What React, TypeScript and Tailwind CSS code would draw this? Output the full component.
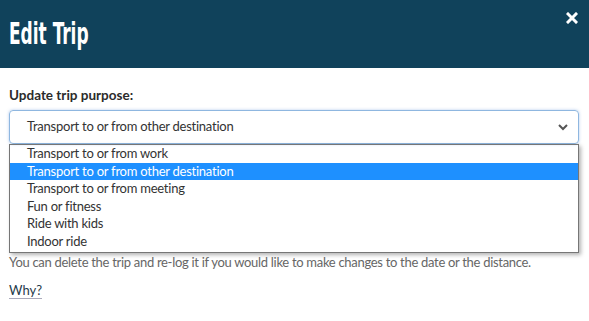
import React, { useState } from "react";

const purposes = [
  "Transport to or from work",
  "Transport to or from other destination",
  "Transport to or from meeting",
  "Fun or fitness",
  "Ride with kids",
  "Indoor ride",
];

export default function App() {
  const [selected, setSelected] = useState(1);

  return (
    <div className="w-[589px] h-[321px] bg-white font-['Lato',sans-serif] overflow-hidden">
      <div className="h-[68px] bg-[#10425b] flex items-start justify-between pl-[9px] pr-[11px]">
        <h1 className="mt-[16px] text-white text-[30px] leading-[36px] font-bold font-['DejaVu_Sans_Condensed','DejaVu_Sans',sans-serif] scale-x-[0.63] origin-left whitespace-nowrap">
          Edit Trip
        </h1>
        <button className="mt-[12px] text-white">
          <svg width="12" height="12" viewBox="0 0 12 12">
            <path d="M2 2 L10 10 M10 2 L2 10" stroke="white" strokeWidth="3" strokeLinecap="square" />
          </svg>
        </button>
      </div>

      <div className="px-[9px] pt-[19px]">
        <label className="block text-[13.5px] leading-[16px] font-bold text-[#2b2b2b]">
          Update trip purpose:
        </label>

        <div className="mt-[7px] w-[570px]">
          <div className="h-[34px] border border-[#8fb7e0] rounded-[4px] shadow-[0_0_3px_rgba(100,150,220,0.5)] flex items-center justify-between pl-[17px] pr-[10px]">
            <span className="text-[13px] tracking-[-0.25px] text-[#333]">{purposes[selected]}</span>
            <svg width="10" height="7" viewBox="0 0 10 7">
              <path d="M1 1 L5 5 L9 1" stroke="#555" strokeWidth="2" fill="none" />
            </svg>
          </div>

          <ul className="border border-[#767676] shadow-[2px_2px_4px_rgba(0,0,0,0.3)] pb-px">
            {purposes.map((p, i) => (
              <li
                key={p}
                onClick={() => setSelected(i)}
                className={
                  i === selected
                    ? "h-[17.6px] leading-[17px] pl-[17px] text-[13px] tracking-[-0.25px] bg-[#1e90ff] text-white"
                    : "h-[17.6px] leading-[17px] pl-[17px] text-[13px] tracking-[-0.25px] text-[#333]"
                }
              >
                {p}
              </li>
            ))}
          </ul>
        </div>

        <p className="mt-px text-[13px] tracking-[-0.3px] leading-[16px] text-[#666]">
          You can delete the trip and re-log it if you would like to make changes to the date or the distance.
        </p>

        <a className="inline-block mt-[12px] text-[13px] leading-[16px] text-[#1f3a4a] border-b border-[#aab]">
          Why?
        </a>
      </div>
    </div>
  );
}
